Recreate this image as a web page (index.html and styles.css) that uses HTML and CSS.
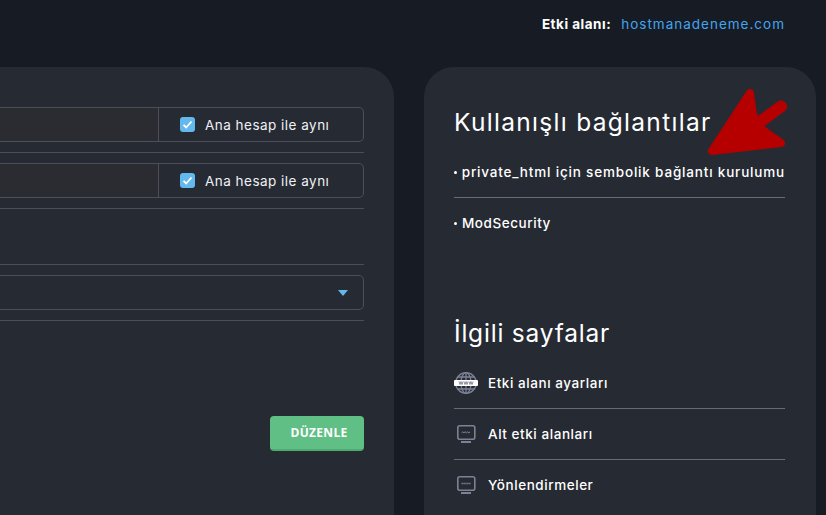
FILE: index.html
```html
<!DOCTYPE html>
<html lang="tr">
<head>
<meta charset="utf-8">
<title>Etki alanı</title>
<link rel="stylesheet" href="styles.css">
</head>
<body>
<header class="topbar">
  <span class="domain-label">Etki alanı:</span>
  <a class="domain-link">hostmanadeneme.com</a>
</header>
<main class="columns">
  <section class="card form-card">
    <div class="row">
      <div class="field-group">
        <div class="field-input"></div>
        <label class="field-check"><span class="checkbox"><svg viewBox="0 0 15 15" width="15" height="15"><path d="M3.5 7.8l2.7 2.7 5.3-6" fill="none" stroke="#fff" stroke-width="1.8"/></svg></span>Ana hesap ile aynı</label>
      </div>
    </div>
    <div class="row">
      <div class="field-group">
        <div class="field-input"></div>
        <label class="field-check"><span class="checkbox"><svg viewBox="0 0 15 15" width="15" height="15"><path d="M3.5 7.8l2.7 2.7 5.3-6" fill="none" stroke="#fff" stroke-width="1.8"/></svg></span>Ana hesap ile aynı</label>
      </div>
    </div>
    <div class="row row-empty"></div>
    <div class="row">
      <div class="select"><span class="caret"></span></div>
    </div>
    <div class="actions"><button class="btn-edit">DÜZENLE</button></div>
  </section>
  <aside class="card side-card">
    <svg class="arrow" viewBox="0 0 95 75" width="95" height="75"><path d="M50 8L12 66 81 58 62.6 45 53 30Z" fill="#b60000" stroke="#b60000" stroke-width="8" stroke-linejoin="round"/><path d="M60 37L81 21.5" fill="none" stroke="#b60000" stroke-width="12" stroke-linecap="round"/></svg>
    <h2 class="side-title">Kullanışlı bağlantılar</h2>
    <ul class="links">
      <li class="link-item">private_html için sembolik bağlantı kurulumu</li>
      <li class="link-item">ModSecurity</li>
    </ul>
    <h2 class="side-title pages-title">İlgili sayfalar</h2>
    <ul class="pages">
      <li class="page-item">
        <svg class="page-icon" viewBox="0 0 26 24" width="26" height="24"><g fill="none" stroke="#7c8294" stroke-width="1.3"><circle cx="12" cy="12" r="10.3"/><ellipse cx="12" cy="12" rx="5" ry="10.3"/><path d="M12 1.5v21M3.5 6h17M3.5 18h17"/></g><rect x="0" y="9" width="24" height="6" rx="1" fill="#fff"/><path d="M5 10.5l1 3 1-3 1 3 1-3M10 10.5l1 3 1-3 1 3 1-3M15 10.5l1 3 1-3 1 3 1-3" fill="none" stroke="#5b6070" stroke-width=".7"/></svg>
        Etki alanı ayarları
      </li>
      <li class="page-item">
        <svg class="page-icon" viewBox="0 0 26 24" width="26" height="24"><rect x="3.8" y="3.8" width="17" height="13.4" rx="2" fill="none" stroke="#7c8294" stroke-width="1.6"/><path d="M7.5 10.8l1.2-1 1.2 1 1.2-1 1.4 1 1.2-1 1.2 1 1.2-1" fill="none" stroke="#8d92a3" stroke-width=".9"/><rect x="7" y="19" width="10" height="2" fill="#7c8294"/></svg>
        Alt etki alanları
      </li>
      <li class="page-item">
        <svg class="page-icon" viewBox="0 0 26 24" width="26" height="24"><rect x="3.8" y="3.8" width="17" height="13.4" rx="2" fill="none" stroke="#7c8294" stroke-width="1.6"/><path d="M7.5 10.5h9.5" fill="none" stroke="#7c8294" stroke-width="1.4" stroke-dasharray="1.4 .5"/><rect x="7" y="19" width="10" height="2" fill="#7c8294"/></svg>
        Yönlendirmeler
      </li>
    </ul>
  </aside>
</main>
</body>
</html>
```
FILE: styles.css
```css
* { box-sizing: border-box; }
html, body { height: 100%; }
body {
  margin: 0;
  height: 515px;
  overflow: hidden;
  background: #171b24;
  color: #fff;
  font-family: Inter, "Noto Sans", sans-serif;
}
.topbar {
  height: 67px;
  padding: 14px 41px 0 0;
  display: flex;
  justify-content: flex-end;
  gap: 10px;
  font-size: 13.5px;
  line-height: 20px;
}
.domain-label { font-weight: 700; letter-spacing: .5px; }
.domain-link { color: #43a5f0; letter-spacing: 1px; }
.columns {
  display: flex;
  gap: 30px;
  margin-left: -100px;
  height: 448px;
  overflow: hidden;
}
.card {
  background: #262a33;
  border-radius: 30px;
  height: 520px;
}
.form-card {
  width: 494px;
  padding: 40px 30px 0 30px;
}
.row {
  min-height: 46px;
  padding-bottom: 10px;
  border-bottom: 1px solid #4c4f58;
  margin-bottom: 10px;
}
.field-group {
  display: flex;
  height: 35px;
  border: 1px solid #4c4f58;
  border-radius: 5px;
}
.field-input {
  flex: 1;
  background: #2b2c31;
  border-right: 1px solid #4c4f58;
}
.field-check {
  width: 204px;
  display: flex;
  align-items: center;
  gap: 10px;
  padding-left: 21px;
  font-size: 13.5px;
  letter-spacing: .48px;
  color: #f0f1f3;
}
.checkbox {
  width: 15px;
  height: 15px;
  border-radius: 3px;
  background: #63b8ee;
  display: flex;
  margin-top: -1px;
}
.select {
  height: 35px;
  border: 1px solid #4c4f58;
  border-radius: 5px;
  display: flex;
  align-items: center;
  justify-content: flex-end;
  padding-right: 15px;
}
.caret {
  width: 0;
  height: 0;
  border-left: 5.5px solid transparent;
  border-right: 5.5px solid transparent;
  border-top: 6px solid #63b8ee;
}
.actions {
  display: flex;
  justify-content: flex-end;
  margin-top: 95px;
}
.btn-edit {
  width: 94px;
  height: 35px;
  padding: 0 0 0 4px;
  border: 0;
  border-bottom: 2px solid #4fac6f;
  border-radius: 4px;
  background: #60bf84;
  color: #fff;
  font-family: "Open Sans", sans-serif;
  font-weight: 700;
  font-size: 12px;
  letter-spacing: .3px;
}
.side-card {
  position: relative;
  width: 392px;
  padding: 40px 31px 0 30px;
}
.arrow {
  position: absolute;
  left: 276px;
  top: 18px;
}
.side-title {
  margin: 0;
  font-weight: 400;
  font-size: 24.5px;
  line-height: 30px;
  letter-spacing: 1.3px;
}
.links, .pages { list-style: none; margin: 0; padding: 0; }
.links { margin-top: 18px; }
.link-item {
  font-size: 13.5px;
  font-weight: 500;
  line-height: 20px;
  letter-spacing: .82px;
  white-space: nowrap;
  display: flex;
  align-items: center;
  gap: 5px;
}
.link-item::before {
  content: "";
  width: 3px;
  height: 3px;
  border-radius: 50%;
  background: #fff;
}
.link-item:first-child {
  height: 43px;
  padding-bottom: 8px;
  border-bottom: 1px solid #666b7a;
}
.link-item:last-child { height: 52px; padding-bottom: 2px; letter-spacing: .55px; }
.pages-title { margin-top: 68px; letter-spacing: .8px; }
.pages { margin-top: 10px; }
.page-item {
  height: 51px;
  display: flex;
  align-items: center;
  gap: 8px;
  font-size: 13.5px;
  font-weight: 500;
  letter-spacing: .56px;
  border-bottom: 1px solid #666b7a;
}
.page-item:last-child { border-bottom-color: transparent; }
```
